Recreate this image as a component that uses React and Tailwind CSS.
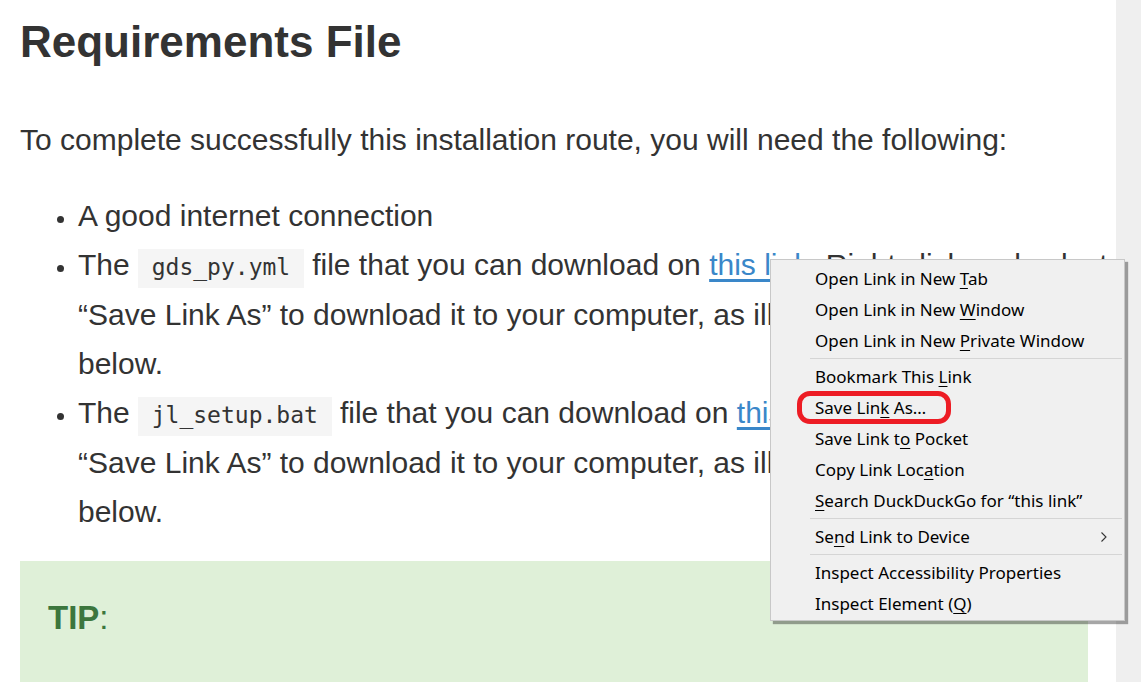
import React from 'react';

const MENU = [
  [['Open Link in New ', 'T', 'ab']],
  [['Open Link in New ', 'W', 'indow']],
  [['Open Link in New ', 'P', 'rivate Window']],
  'sep',
  [['Bookmark This ', 'L', 'ink']],
  [['Save Lin', 'k', ' As…'], 'circled'],
  [['Save Link t', 'o', ' Pocket']],
  [['Copy Link Loc', 'a', 'tion']],
  [['', 'S', 'earch DuckDuckGo for “this link”']],
  'sep',
  [['Se', 'n', 'd Link to Device'], 'sub'],
  'sep',
  [['Inspect Accessibility Properties', '', '']],
  [['Inspect Element (', 'Q', ')']],
];

function Code({ children }) {
  return (
    <code className="bg-[#f5f5f5] px-[14px] pt-[5px] pb-[8px] ml-[8px] mr-[8px] text-[23px] leading-[20px] text-[#333] font-['DejaVu_Sans_Mono',monospace]">
      {children}
    </code>
  );
}

function ContextMenu() {
  return (
    <div className="absolute left-[770px] top-[259px] w-[355px] bg-[#f0f0f0] border border-[#c8c8c8] shadow-[3px_3px_1px_rgba(0,0,0,0.35)] pt-[3px] pb-[1px] font-['Noto_Sans',sans-serif] text-[17px] text-black">
      {MENU.map((item, i) => {
        if (item === 'sep') {
          return <div key={i} className="ml-[39px] mr-[2px] my-[2px] h-[1px] bg-[#d5d5d5]" />;
        }
        const [[a, u, b], flag] = item;
        return (
          <div key={i} className="relative h-[31px] flex items-center pl-[44px] pr-[16px]">
            <span className="flex-1 whitespace-nowrap">
              {a}
              {u && <u className="underline-offset-[3px]">{u}</u>}
              {b}
            </span>
            {flag === 'sub' && (
              <svg width="8" height="12" viewBox="0 0 8 12">
                <path d="M1.5 1.5 L6 6 L1.5 10.5" fill="none" stroke="#333" strokeWidth="1.1" />
              </svg>
            )}
            {flag === 'circled' && (
              <div className="absolute left-[26px] top-[-1px] w-[154px] h-[33px] rounded-[13px] border-[5px] border-[#ed1c24]" />
            )}
          </div>
        );
      })}
    </div>
  );
}

export default function App() {
  return (
    <div className="relative w-[1141px] h-[682px] overflow-hidden flex bg-white font-['Liberation_Sans',Arial,sans-serif] text-[#333]">
      <main className="w-[1116px] shrink-0 overflow-hidden pl-[20px] pr-[28px]">
        <h1 className="mt-[18px] text-[44px] leading-[48px] font-bold">Requirements File</h1>
        <p className="mt-[49px] text-[30px] leading-[49px]">
          To complete successfully this installation route, you will need the following:
        </p>
        <ul className="mt-[27px] pl-[58px] list-disc text-[30px] leading-[49.33px] whitespace-nowrap marker:text-[24px]">
          <li>A good internet connection</li>
          <li>
            The<Code>gds_py.yml</Code>file that you can download on{' '}
            <a className="text-[#3a87c9] underline underline-offset-[4px]">this link</a>. Right click and select
            <br />
            “Save Link As” to download it to your computer, as illustrated in the image
            <br />
            below.
          </li>
          <li>
            The<Code>jl_setup.bat</Code>file that you can download on{' '}
            <a className="text-[#3a87c9] underline underline-offset-[4px]">this link</a>. Right click and select
            <br />
            “Save Link As” to download it to your computer, as illustrated in the image
            <br />
            below.
          </li>
        </ul>
        <div className="mt-[25px] bg-[#dff0d8] px-[28px] pt-[35px] h-[200px]">
          <p className="text-[33px] leading-[44px] text-[#3c763d]">
            <strong>TIP</strong>:
          </p>
        </div>
      </main>
      <div className="flex-1 bg-[#efefef]" />
      <ContextMenu />
    </div>
  );
}
